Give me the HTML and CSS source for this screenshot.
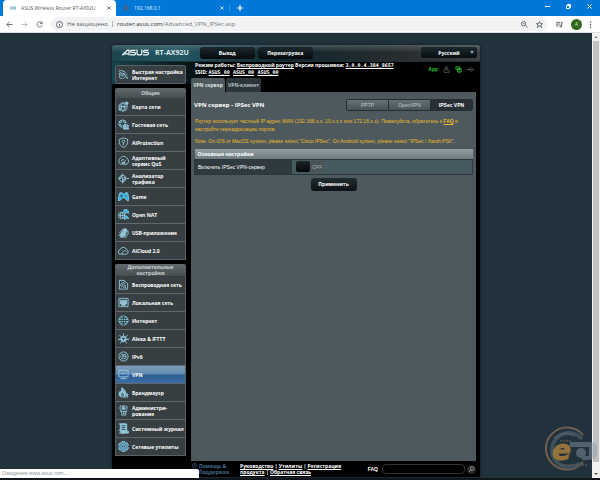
FILE: index.html
```html
<!DOCTYPE html>
<html lang="ru">
<head>
  <meta charset="UTF-8">
  <meta name="viewport" content="width=device-width, initial-scale=1.0">
  <title>ASUS Wireless Router RT-AX92U</title>
  <link rel="stylesheet" href="styles.css">
</head>
<body>
  <header class="browser">
    <div class="tab-strip">
      <div class="browser-tab active">
        <svg class="favicon" viewBox="0 0 24 24"><circle cx="12" cy="12" r="3" fill="#2a8fa8"/><path d="M7 6c-3 3-3 9 0 12M17 6c3 3 3 9 0 12M3 4c-4 5-4 11 0 16M21 4c4 5 4 11 0 16M12 6v12" fill="none" stroke="#56aebf" stroke-width="3"/></svg>
        <span class="tab-title">ASUS Wireless Router RT-AX92U</span>
        <button class="tab-close" aria-label="Закрыть"><svg viewBox="0 0 10 10"><path d="M1 1l8 8M9 1l-8 8"/></svg></button>
      </div>
      <div class="browser-tab">
        <svg class="favicon" viewBox="0 0 24 24"><circle cx="12" cy="12" r="11" fill="#47617c"/><path d="M4 7l6-2 3 4-4 3 2 6-4-4zM15 12l5-3v7l-4 3z" fill="#1c75c9"/></svg>
        <span class="tab-title">192.168.0.1</span>
        <button class="tab-close" aria-label="Закрыть"><svg viewBox="0 0 10 10"><path d="M1 1l8 8M9 1l-8 8"/></svg></button>
      </div>
      <button class="new-tab" aria-label="Новая вкладка"><svg viewBox="0 0 10 10"><path d="M5 0v10M0 5h10"/></svg></button>
      <div class="window-buttons">
        <button aria-label="Свернуть"><svg viewBox="0 0 10 10"><path d="M0 5h10"/></svg></button>
        <button aria-label="Развернуть"><svg viewBox="0 0 10 10"><path d="M1 3h6v6h-6zM3 3v-2h6v6h-2"/></svg></button>
        <button aria-label="Закрыть окно"><svg viewBox="0 0 10 10"><path d="M1 1l8 8M9 1l-8 8"/></svg></button>
      </div>
    </div>
    <div class="toolbar">
      <button aria-label="Назад"><svg viewBox="0 0 16 16"><path d="M15 8H2M8 2L2 8l6 6"/></svg></button>
      <button class="disabled" aria-label="Вперед"><svg viewBox="0 0 16 16"><path d="M1 8h13M8 2l6 6-6 6"/></svg></button>
      <button aria-label="Обновить"><svg viewBox="0 0 16 16"><path d="M13 4a6 6 0 1 0 1 6M14 1v5H9"/></svg></button>
      <div class="address">
        <svg viewBox="0 0 16 16"><circle cx="8" cy="8" r="7"/><path d="M8 7v5M8 4v1"/></svg>
        <span class="insecure">Не защищено</span>
        <span class="url"><b>router.asus.com</b>/Advanced_VPN_IPSec.asp</span>
        <svg viewBox="0 0 16 16"><circle cx="6" cy="6" r="5"/><path d="M10 10l5 5M4 6h4"/></svg>
        <svg viewBox="0 0 16 16"><path d="M8 1l2 5h5l-4 3 2 6-5-4-5 4 2-6-4-3h5z"/></svg>
      </div>
      <button aria-label="Медиа"><svg viewBox="0 0 16 16"><path d="M0 3h10M0 7h10M0 11h6M13 12V3h3"/><circle cx="11" cy="12" r="2"/></svg></button>
      <button class="avatar">A</button>
      <button aria-label="Меню"><svg viewBox="0 0 16 16"><path d="M8 1v3M8 7v3M8 13v3" stroke-width="3"/></svg></button>
    </div>
  </header>

  <div class="viewport">
    <div class="page">
      <div class="router">
        <div class="top-banner">
          <svg class="logo" viewBox="0 0 108 26" role="img" aria-label="ASUS">
            <g fill="none" stroke="#eef6f8" stroke-width="5">
              <path d="M1 24L22 3h6v21M9 18h17"/>
              <path d="M54 4H38q-4 0-4 4t4 4h11q5 0 5 5t-5 5H32"/>
              <path d="M60 1v16q0 5 5 5h9q5 0 5-5V1"/>
              <path d="M106 4H90q-4 0-4 4t4 4h11q5 0 5 5t-5 5H84"/>
            </g>
          </svg>
          <span class="model">RT-AX92U</span>
          <button class="banner-btn">Выход</button>
          <button class="banner-btn">Перезагрузка</button>
          <label class="language"><select aria-label="Язык"><option>Русский</option></select></label>
        </div>

        <div class="columns">
          <nav class="sidebar">
            <ul class="menu quick">
              <li><a href="#"><svg viewBox="0 0 24 24"><path d="M7 3h3l1 3 3-1 2 3-2 2M6 8l-4 3 2 4-1 3 3 3 4-1M1 5l5 3M3 1l3 4"/><path d="M13 10l8 11M20 10l-8 11M14 8l-4 4M18 20l4-3"/><circle cx="9" cy="12" r="3"/></svg><span>Быстрая настройка<br>Интернет</span></a></li>
            </ul>
            <h2 class="menu-title">Общие</h2>
            <ul class="menu">
              <li><a href="#"><svg viewBox="0 0 24 24"><circle cx="11" cy="13" r="9"/><path d="M2 12h17M11 4c-5 5-5 13 0 18M11 4c5 5 5 13 0 18M4 7l14 12"/><circle cx="19" cy="5" r="3" class="fill"/><circle cx="4" cy="18" r="2" class="fill"/></svg><span>Карта сети</span></a></li>
              <li><a href="#"><svg viewBox="0 0 24 24"><circle cx="10" cy="10" r="8" class="fill"/><path class="dark" d="M2 10h17M10 2v16M5 4c4 4 4 8 0 12M15 4c-4 4-4 8 0 12"/><circle cx="15" cy="15" r="2" class="fill"/><circle cx="21" cy="15" r="2" class="fill"/><path class="fill" d="M12 22v-3h11v3z"/></svg><span>Гостевая сеть</span></a></li>
              <li><a href="#"><svg viewBox="0 0 24 24"><path d="M12 2l9 3v7c0 5-4 8-9 11-5-3-9-6-9-11V5z"/><circle cx="12" cy="10" r="3"/><path d="M12 13v5"/></svg><span>AiProtection</span></a></li>
              <li><a href="#"><svg viewBox="0 0 24 24"><path d="M5 20a10 10 0 1 1 15 0zM7 14a5 5 0 0 1 6-4M12 16l6-6"/><path class="fill" d="M9 16h6v2H9z"/></svg><span>Адаптивный сервис QoS</span></a></li>
              <li><a href="#"><svg viewBox="0 0 24 24"><circle cx="10" cy="12" r="7"/><path d="M0 12h6l2-7 3 15 3-11 2 6 2-3h6M10 1v5M10 18v5"/></svg><span>Анализатор<br>трафика</span></a></li>
              <li><a href="#"><svg viewBox="0 0 24 24"><path class="bright" d="M4 4h5l2 3h3l2-3h5l3 16-4 1-5-6H9l-5 6-4-1z"/><path class="dark" d="M5 11h5M8 8v6M16 9v1M19 12v1"/></svg><span>Game</span></a></li>
              <li><a href="#"><svg viewBox="0 0 24 24"><circle cx="8" cy="14" r="7"/><path d="M1 14h14M8 7c-4 5-4 10 0 14M8 7c4 5 4 10 0 14"/><path class="bright" d="M13 2l5-2 4 4 2 5-5-1-3 2-4-4zM14 15h5l5 6-5-1-5 3z"/></svg><span>Open NAT</span></a></li>
              <li><a href="#"><svg viewBox="0 0 24 24"><path class="fill" d="M14 3l5 2-3 13-7 4-5-3z"/><path d="M3 13l8-9M2 19l7-8M16 11l6-3v8l-6 5M4 22h15"/></svg><span>USB-приложение</span></a></li>
              <li><a href="#"><svg viewBox="0 0 24 24"><path d="M6 20a5 5 0 0 1-1-10 7 7 0 0 1 13-1 6 6 0 0 1 1 11zM10 20a5 5 0 0 1 9-5"/></svg><span>AiCloud 2.0</span></a></li>
            </ul>
            <h2 class="menu-title advanced">Дополнительные настройки</h2>
            <ul class="menu">
              <li><a href="#"><svg viewBox="0 0 24 24"><path d="M3 22V3h10l8 7v12zM8 18a8 8 0 0 1 8-8M5 15A12 12 0 0 1 14 6M12 19a5 5 0 0 1 5-5"/><circle cx="16" cy="18" r="1"/></svg><span>Беспроводная сеть</span></a></li>
              <li><a href="#"><svg viewBox="0 0 24 24"><path d="M2 3h20v18H2z"/><path class="fill" d="M5 7h3v3h2V7h4v3h2V7h3v8h-3v3H8v-3H5z"/></svg><span>Локальная сеть</span></a></li>
              <li><a href="#"><svg viewBox="0 0 24 24"><circle cx="12" cy="12" r="10" class="fill"/><path class="dark" d="M2 12h20M4 7h16M4 17h16M12 2v20M12 2c-7 6-7 14 0 20M12 2c7 6 7 14 0 20"/></svg><span>Интернет</span></a></li>
              <li><a href="#"><svg viewBox="0 0 24 24"><circle cx="12" cy="13" r="6" class="fill"/><path d="M12 7V1M7 9L3 4M17 9l4-5M6 14H0M18 14h6M8 18l-3 5M16 18l3 5"/><circle cx="2" cy="14" r="1"/><circle cx="22" cy="14" r="1"/><path class="dark" d="M9 12h6M12 10v6"/></svg><span>Alexa &amp; IFTTT</span></a></li>
              <li><a href="#"><svg viewBox="0 0 24 24"><circle cx="12" cy="12" r="10"/><path d="M5 5c4 4 10 4 14 0M5 19c4-4 10-4 14 0M6 10v4M10 14v-4h3v2h-3M18 10h-2v4h2v-2h-2"/></svg><span>IPv6</span></a></li>
              <li class="selected"><a href="#"><svg viewBox="0 0 24 24"><path d="M2 3h20v14H2zM12 17v4M5 21h14"/><circle cx="8" cy="10" r="1"/><circle cx="12" cy="10" r="1"/><circle cx="16" cy="10" r="1"/></svg><span>VPN</span></a></li>
              <li><a href="#"><svg viewBox="0 0 24 24"><path class="fill" d="M9 1c5 5 1 7 4 9l1-4c5 7 4 16-4 16S0 15 5 9l2 3c2-4 0-7 2-11z"/><path class="dark" d="M9 21c-3-4 1-5 0-8 4 4 4 6 1 8"/><path d="M15 15h6v7h-8M18 15v3M14 18h8"/></svg><span>Брандмауэр</span></a></li>
              <li><a href="#"><svg viewBox="0 0 24 24"><path d="M8 3l4-2 4 2 3-1 1 6-3 2 2 4H5l2-4-3-2 1-6z"/><circle cx="12" cy="7" r="3" class="fill"/><path d="M8 14v8h9v-8M12 16v4l5-5"/></svg><span>Администри-<br>рование</span></a></li>
              <li><a href="#"><svg viewBox="0 0 24 24"><path class="fill" d="M5 2h14v16h4v4H7l-2-4z"/><path class="dark" d="M8 6h8M8 10h8M8 14h8"/><path d="M2 2h14M2 22h14M2 16h4"/></svg><span>Системный журнал</span></a></li>
              <li><a href="#"><svg viewBox="0 0 24 24"><path class="gear" d="M9 1h6l1 4 4-1 3 5-3 3 3 3-3 5-4-1-1 4H9l-1-4-4 1-3-5 3-3-3-3 3-5 4 1z"/><circle cx="12" cy="12" r="4" class="hub"/><path d="M12 10v4"/></svg><span>Сетевые утилиты</span></a></li>
            </ul>
          </nav>

          <main class="main">
            <div class="status">
              <div class="status-text">
                Режим работы: <a href="#">Беспроводной роутер</a> Версия прошивки: <a href="#" class="mono">3.0.0.4.384_8657</a><br>
                SSID: <a href="#" class="mono ssid">ASUS_00</a> <a href="#" class="mono ssid">ASUS_00</a> <a href="#" class="mono ssid">ASUS_00</a>
              </div>
              <div class="status-icons">
                <span>App</span>
                <svg class="off" viewBox="0 0 24 24"><path d="M3 20v-6l5-3h4M8 3h8v8H8zM12 14h9v8H3"/></svg>
                <svg viewBox="0 0 24 24"><path d="M3 3h13v9H3zM9 9h12v12H9zM12 17h6"/></svg>
                <svg class="off" viewBox="0 0 24 24"><path d="M1 12h22M19 9l4 3-4 3M6 12l5-6h4M9 12l5 6h4"/><circle cx="3" cy="12" r="2"/></svg>
              </div>
            </div>
            <div class="tabs">
              <a href="#" class="tab current">VPN сервер</a>
              <a href="#" class="tab">VPN-клиент</a>
            </div>
            <section class="panel">
              <div class="panel-head">
                <h1>VPN сервер - IPSec VPN</h1>
                <div class="switcher">
                  <button>PPTP</button>
                  <button>OpenVPN</button>
                  <button class="pressed">IPSec VPN</button>
                </div>
              </div>
              <div class="notes">
                <p>Роутер использует частный IP-адрес WAN (192.168.x.x, 10.x.x.x или 172.16.x.x). Пожалуйста, обратитесь к <a href="#">FAQ</a> и настройте переадресацию портов.</p>
                <p>Note: On iOS or MacOS system, please select "Cisco IPSec". On Android system, please select "IPSec / Xauth PSK".</p>
              </div>
              <table class="settings">
                <thead><tr><th colspan="2">Основные настройки</th></tr></thead>
                <tbody>
                  <tr>
                    <td class="name"><label for="vpn-on">Включить IPSec VPN-сервер</label></td>
                    <td><label class="toggle"><input type="checkbox" id="vpn-on"><span>OFF</span></label></td>
                  </tr>
                </tbody>
              </table>
              <button class="apply">Применить</button>
            </section>
          </main>
        </div>

        <footer class="footer">
          <div class="help"><svg viewBox="0 0 24 24"><circle cx="12" cy="12" r="10"/><path d="M9 9q3-4 6 0-1 3-3 4v2M12 18v1"/></svg><span>Помощь &amp;<br>Поддержка</span></div>
          <div class="links"><a href="#">Руководство</a> | <a href="#">Утилиты</a> | <a href="#">Регистрация<br>продукта</a> | <a href="#">Обратная связь</a></div>
          <label class="faq"><span>FAQ</span><input type="text"></label>
          <button class="search" aria-label="Поиск"><svg viewBox="0 0 24 24"><circle cx="14" cy="9" r="6"/><path d="M10 13l-7 8"/></svg></button>
        </footer>
      </div>
    </div>
    <div class="scrollbar"><i class="up"></i><div class="thumb"></div><i class="down"></i></div>
    <svg class="watermark" viewBox="0 0 56 50">
      <g fill="none">
        <path d="M41 11A21 21 0 1 0 41 38" stroke="#6e5f4f" stroke-width="2"/>
        <path d="M40 15A17 17 0 1 0 38 39" stroke="#3f505c" stroke-width="4"/>
        <path d="M13 14q9-8 20-2" stroke="#56606a" stroke-width="2" stroke-dasharray="2 1"/>
        <path d="M18 17h12M19 41h26" stroke="#6c6459" stroke-width="1" stroke-dasharray="2 1"/>
      </g>
      <g class="badge">
        <path d="M28 18h20q7 0 7 6v5q0 7-9 7h-6v-4h7v-9H28z"/>
        <circle cx="39" cy="29" r="5"/>
      </g>
      <text x="10" y="36">e</text>
    </svg>
    <div class="load-status">Ожидание www.asus.com...</div>
  </div>
</body>
</html>
```
FILE: styles.css
```css
* {
  box-sizing: border-box;
}

body {
  margin: 0;
  min-height: 100vh;
  display: flex;
  flex-direction: column;
  font-family: "Liberation Sans", Arial, sans-serif;
  font-size: 5px;
  line-height: 6px;
  color: white;
  background: #22323d;
}

button {
  font: inherit;
  color: inherit;
  background: none;
  border: none;
  padding: 0;
  cursor: pointer;
}

svg {
  display: block;
  flex: none;
  fill: none;
  stroke: currentColor;
}

ul {
  list-style: none;
  margin: 0;
  padding: 0;
}

a {
  color: inherit;
}

/* browser window */
.browser {
  font-family: "Open Sans", "Noto Sans", sans-serif;
}

.tab-strip {
  display: flex;
  align-items: center;
  height: 16px;
  padding-left: 3px;
  background: #0078d7;
}

.browser-tab {
  display: flex;
  align-items: center;
  gap: 5px;
  width: 113px;
  height: 16px;
  padding: 0 5px 0 7px;
  color: #e5f2fc;
}

.browser-tab.active {
  color: #55595d;
  background: white;
  border-radius: 4px 4px 0 0;
}

.tab-title {
  flex: 1;
  overflow: hidden;
  white-space: nowrap;
}

.favicon {
  width: 6px;
  height: 6px;
  stroke: none;
}

.tab-close svg,
.new-tab svg {
  width: 4px;
  height: 4px;
  stroke-width: 2;
}

.new-tab {
  padding-left: 7px;
  border-left: 1px solid #3a95df;
}

.new-tab svg {
  width: 6px;
  height: 6px;
}

.window-buttons {
  display: flex;
  gap: 16px;
  margin-left: auto;
  padding: 0 8px 3px 0;
}

.window-buttons svg {
  width: 5px;
  height: 5px;
  stroke-width: 2;
}

.toolbar {
  display: flex;
  align-items: center;
  gap: 8px;
  height: 17px;
  padding: 0 6px;
  color: #5a5e62;
  background: white;
  border-bottom: 1px solid #dcdfe1;
}

.toolbar svg {
  width: 7px;
  height: 7px;
  stroke-width: 2;
}

.toolbar .disabled {
  color: #b5b8ba;
}

.address {
  flex: 1;
  display: flex;
  align-items: center;
  gap: 8px;
  height: 14px;
  padding: 0 5px;
  border-radius: 7px;
  background: #f1f3f4;
  font-size: 6px;
}

.insecure {
  margin-left: -4px;
  padding-right: 4px;
  border-right: 1px solid #b5b8ba;
}

.url {
  flex: 1;
  margin-left: -4px;
  color: #777b7f;
}

.url b {
  font-weight: normal;
  color: #303438;
}

.avatar {
  width: 11px;
  height: 11px;
  border-radius: 50%;
  color: #d5ecd0;
  background: #33691e;
}

.toolbar button:last-child {
  margin-left: -3px;
}

.viewport {
  position: relative;
  flex: 1;
  display: flex;
  border-bottom: 2px solid #10161b;
}

.page {
  flex: 1;
  display: flex;
  justify-content: center;
  padding: 12px 0 1px;
}

/* router */
.router {
  width: 62%;
  min-width: 368px;
  display: flex;
  flex-direction: column;
  background: black;
  border-radius: 2px 2px 0 0;
  box-shadow: 0 0 3px #0c151b;
}

.top-banner {
  display: flex;
  align-items: center;
  gap: 3px;
  height: 17px;
  padding: 0 3px 1px 10px;
  background: linear-gradient(to bottom, rgba(110, 130, 135, 0.5), rgba(0, 0, 0, 0) 45%), linear-gradient(to right, #1d4650, #235863 18%, #10272e 45%, #292d2f 80%, #3d4143);
  border-bottom: 1px solid #1b3139;
  border-radius: 2px 2px 0 0;
}

.logo {
  width: 27px;
  height: 7px;
}

.model {
  margin: 0 8px 0 3px;
  font-family: "Open Sans", sans-serif;
  font-size: 7px;
  font-weight: bold;
  color: #d9e8ea;
}

.banner-btn {
  width: 55px;
  height: 12px;
  border-radius: 3px;
  font-family: "Open Sans", sans-serif;
  font-weight: bold;
  background: linear-gradient(to bottom, #1b292e, #05090b);
}

.language {
  margin-left: auto;
  position: relative;
}

.language select {
  display: block;
  width: 56px;
  height: 11px;
  padding: 0 12px;
  appearance: none;
  border: none;
  border-radius: 2px;
  color: white;
  font: bold 5px "Open Sans", sans-serif;
  text-align: center;
  background: linear-gradient(to bottom, #1c2a30, #080e11);
}

.language::after {
  content: "";
  position: absolute;
  right: 3px;
  top: 4px;
  border: 2px solid transparent;
  border-top: 3px solid #8aa5b6;
}

.columns {
  flex: 1;
  display: flex;
  gap: 5px;
  padding: 0 4px 0 3px;
  background: linear-gradient(to right, #17444e, rgba(0, 0, 0, 0) 30%) top / 100% 22px no-repeat;
}

.sidebar {
  width: 71px;
  padding-top: 3px;
  font-family: "Open Sans", "Noto Sans", sans-serif;
}

.menu {
  border: 1px solid #596164;
  border-top: none;
  background: #383f42;
}

.menu li {
  height: 18px;
  border-bottom: 1px solid #5f686b;
}

.menu li:last-child {
  height: 17px;
  border-bottom: none;
}

.menu a {
  display: flex;
  align-items: center;
  gap: 3px;
  height: 100%;
  padding-left: 2px;
  font-weight: bold;
  text-decoration: none;
}

.menu svg {
  width: 11px;
  height: 11px;
  color: #91c6da;
  stroke-width: 2;
}

.menu .fill {
  fill: #91c6da;
}

.menu .bright {
  fill: #3fb0dc;
  stroke: #79cbe8;
}

.menu .gear {
  fill: #4b8eaa;
}

.menu .hub {
  fill: #2c454f;
}

.menu .dark {
  stroke: #2c454f;
}

.quick {
  border-top: 1px solid #596164;
  border-radius: 2px;
  margin-bottom: 4px;
}

.menu .selected {
  background: linear-gradient(to bottom, #7e9cba, #6189b1 48%, #2d5c92 52%, #3a6ea6);
}

.menu-title {
  margin: 0;
  padding: 2px 8px;
  font-size: 5px;
  font-weight: bold;
  line-height: 6px;
  text-align: center;
  color: #c9cfd1;
  background: linear-gradient(to bottom, #626a6d, #464e51);
  border-radius: 2px 2px 0 0;
}

.menu-title.advanced {
  margin-top: 4px;
  padding: 0 8px;
}

.main {
  flex: 1;
  display: flex;
  flex-direction: column;
}

.status {
  display: flex;
  justify-content: space-between;
  height: 16px;
  padding: 0 2px 0 4px;
}

.status-text {
  font-family: "Open Sans", sans-serif;
  line-height: 7px;
  font-weight: bold;
}

.mono {
  font-family: "DejaVu Sans Mono", monospace;
}

.ssid {
  margin-right: 2px;
}

.status-icons {
  display: flex;
  align-items: center;
  gap: 5px;
  height: 14px;
  color: #2fc53a;
  font-weight: bold;
}

.status-icons svg {
  width: 7px;
  height: 7px;
  stroke-width: 3;
}

.status-icons .off {
  color: #4c5254;
}

.tabs {
  display: flex;
  gap: 1px;
}

.tab {
  height: 14px;
  padding: 4px 2px;
  min-width: 34px;
  font-family: "Open Sans", sans-serif;
  font-weight: bold;
  text-align: center;
  text-decoration: none;
  color: #b8c0c3;
  background: #2c353a;
  border-radius: 2px 2px 0 0;
}

.tab.current {
  color: #dde2e3;
  background: #4d595d;
}

.panel {
  flex: 1;
  display: flex;
  flex-direction: column;
  padding: 7px 3px;
  background: #4d595d;
}

.panel-head {
  display: flex;
  align-items: center;
  justify-content: space-between;
}

h1 {
  margin: 0;
  font-family: "Open Sans", sans-serif;
  font-size: 6px;
  line-height: 8px;
}

.switcher {
  display: flex;
  border: 1px solid #252e32;
  border-radius: 2px;
}

.switcher button {
  width: 42px;
  height: 10px;
  color: #c2cbce;
  background: linear-gradient(to bottom, #637177, #46545a);
  border-right: 1px solid #252e32;
}

.switcher .pressed {
  width: 41px;
  border: none;
  color: white;
  font-weight: bold;
  background: #283036;
}

.notes {
  padding: 6px 1px 0;
  color: #ecb92c;
}

.notes p {
  margin: 0 0 4px;
  line-height: 8px;
}

.notes a {
  font-weight: bold;
}

.settings {
  width: 100%;
  border-collapse: collapse;
}

.settings th {
  height: 10px;
  padding: 0 3px;
  text-align: left;
  font-family: "Open Sans", sans-serif;
  background: linear-gradient(to bottom, #93a0a5, #6c797e);
}

.settings td {
  height: 15px;
  padding: 0 4px;
  border: 1px solid #2c373b;
  background: #475a5f;
}

.settings .name {
  width: 35%;
  padding: 0 3px;
  background: #2f3a3e;
}

.toggle {
  display: flex;
  align-items: center;
  width: 28px;
  height: 11px;
  color: #a4acb0;
  background: #4a5458;
  border-radius: 2px;
}

.toggle input {
  appearance: none;
  width: 14px;
  height: 11px;
  margin: 0 2px 0 0;
  border-radius: 2px;
  background: linear-gradient(to bottom, #1a2527, #050809);
}

.apply {
  align-self: center;
  width: 46px;
  height: 13px;
  margin-top: 3px;
  border-radius: 3px;
  font-family: "Open Sans", sans-serif;
  font-weight: bold;
  background: linear-gradient(to bottom, #1f2d31, #0c1214);
}

.footer {
  display: flex;
  align-items: center;
  height: 16px;
  padding: 0 4px 0 80px;
  font-family: "Open Sans", sans-serif;
  font-weight: bold;
}

.help {
  display: flex;
  gap: 2px;
  width: 48px;
  color: #44698a;
}

.help svg {
  width: 5px;
  height: 5px;
  stroke-width: 3;
}

.links {
  white-space: nowrap;
}

.faq {
  flex: 1;
  display: flex;
  align-items: center;
  justify-content: flex-end;
  gap: 4px;
  font-family: "Liberation Sans", sans-serif;
}

.faq input {
  width: 83px;
  height: 10px;
  padding: 0 3px;
  border: 1px solid #303335;
  border-radius: 4px;
  background: black;
  color: white;
  font-size: 5px;
}

.search {
  margin-left: 2px;
  padding: 1px;
  border-radius: 50%;
  color: #9c9c9c;
  background: #27292a;
}

.search svg {
  width: 7px;
  height: 7px;
  stroke-width: 3;
}

.scrollbar {
  width: 8px;
  display: flex;
  flex-direction: column;
  align-items: center;
  padding: 3px 1px;
  gap: 3px;
  background: #f1f1f1;
}

.scrollbar i {
  border: 2px solid transparent;
}

.scrollbar .up {
  border-top: none;
  border-bottom-color: #8c8c8c;
}

.scrollbar .down {
  border-bottom: none;
  border-top-color: #505050;
}

.thumb {
  flex: 1;
  width: 6px;
  margin-bottom: 8px;
  background: #c1c1c1;
}

.watermark {
  position: absolute;
  right: 2px;
  bottom: 4px;
  width: 56px;
  height: 50px;
}

.badge {
  fill: #8899a6;
  stroke: none;
  opacity: 0.45;
}

.watermark text {
  fill: #94733d;
  stroke: #94733d;
  font: italic bold 28px "DejaVu Sans", sans-serif;
}

.load-status {
  position: absolute;
  left: 0;
  bottom: 0;
  width: 199px;
  height: 9px;
  padding: 1px 2px;
  color: #85898c;
  background: white;
  border-radius: 0 2px 0 0;
  font-family: "Open Sans", sans-serif;
}
```
